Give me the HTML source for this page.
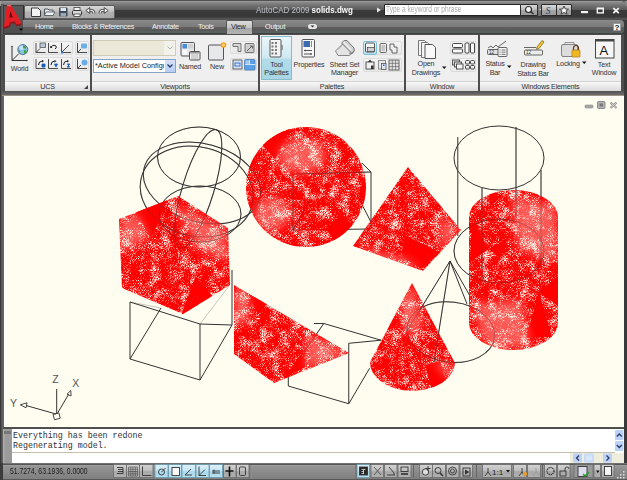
<!DOCTYPE html>
<html><head><meta charset="utf-8">
<style>
*{margin:0;padding:0;box-sizing:border-box}
html,body{width:627px;height:480px;overflow:hidden;background:#3a3a3a;font-family:"Liberation Sans",sans-serif}
.a{position:absolute}
svg{display:block}
#title{left:0;top:0;width:627px;height:20px;background:linear-gradient(#484848 0px,#484848 0.7px,#9c9c9c 1.1px,#949494 1.9px,#8a8a8a 2.2px,#6e6e6e 6px,#5a5a5a 9.8px,#3a3a3a 10.3px,#383838 17.3px,#505050 17.8px,#505050 20px)}
#tabrow{left:23px;top:20px;width:601px;height:14px;background:linear-gradient(#8e8e8e 0px,#868686 1.5px,#7a7a7a 7px,#5c5c5c 7.6px,#585858 11px,#5a6262 11.6px,#586060 13px,#3c3c3c 13.6px);border-radius:0 4px 4px 0}
.tab{top:20px;height:14px;font-size:7.3px;letter-spacing:-0.3px;color:#f2f2f2;line-height:13px;white-space:nowrap}
#ribbon{left:2px;top:34px;width:622px;height:62px;background:linear-gradient(#4e4e4e 0px,#4e4e4e 57px,#5a5a5a 58px,#6c6c6c 61px,#9a9682 61.5px,#9a9682 62px)}
.panel{top:35px;height:56px;background:#efefef}
.ptitle{top:81px;height:10px;background:linear-gradient(#d2d2d2 0px,#d2d2d2 1px,#f6f6f6 1.5px,#ececec 5px,#d9d9d9 10px);font-size:7.2px;letter-spacing:-0.2px;color:#333;text-align:center;line-height:11.5px}
#canvas{left:4px;top:96px;width:620px;height:331px;background:#fffcf0;border:1px solid #fff;border-bottom:none}
.lbl{font-size:7.2px;letter-spacing:-0.2px;color:#333;text-align:center;line-height:8.5px;white-space:nowrap}
.sb{border:1px solid #dcdcdc;border-radius:2px;background:linear-gradient(#f4f4f4,#e8e8e8)}
</style></head><body>

<div class="a" id="title"></div>
<div class="a" style="left:0;top:0;width:4px;height:4px;border-top-left-radius:4px;border-top:1px solid #aaa;border-left:1px solid #aaa"></div>
<div class="a" style="left:0;top:4px;width:4px;height:476px;background:linear-gradient(90deg,#3a3a3a,#3a3a3a 1.3px,#555 1.5px,#606060 2.5px,#6a6a62 4px)"></div>
<!-- app button -->
<div class="a" style="left:3px;top:5px;width:21px;height:29px;background:linear-gradient(#5a5a5a,#4e4e4e);border:1px solid #3a3a3a;border-right-color:#2d2d2d"></div>
<svg class="a" style="left:3px;top:4px" width="21" height="30" viewBox="0 0 21 30">
<path d="M0.75,23 L4,1 L7.8,1 L18.7,19.3 L13.5,20.5 L12,17.5 L7,18 L6,21.5 Z" fill="#e41e24"/>
<path d="M0.75,23 L6,21.5 L7,18 L12,17.5 L13.5,20.5 L18.7,19.3 L18.2,21 L13.2,22.3 L11.8,19.3 L7.8,19.8 L6.8,23.3 L1.2,24.8 Z" fill="#9a1014"/>
<path d="M7.5,7 L9.8,13.5 L6.3,13.5 Z" fill="#6a0c0e"/>
<path d="M4,1 L7.8,1 L8.5,2.2 L4.3,2.2 Z" fill="#ff6a6a"/>
<path d="M16,24.5 h4 l-2,2.2 z" fill="#000"/>
</svg>
<!-- QAT -->
<div class="a" style="left:24px;top:5px;width:91px;height:14px;border:1px solid #5c5c5c;border-radius:2px;background:linear-gradient(#d6d6d6 0px,#c4c4c4 5px,#b2b2b2 6px,#a9a9a9 13px)"></div>
<svg class="a" style="left:24px;top:5px" width="91" height="14" viewBox="24 5 91 14">
<!-- new -->
<path d="M31.5,8 h6.5 l2.5,2.5 v6 h-9 z" fill="#f4f4f4" stroke="#3c3c3c" stroke-width="1"/>
<!-- open -->
<path d="M44.5,9 h3.5 l1,1 h4 v5.5 h-8.5 z" fill="#dfe4ea" stroke="#505860" stroke-width="1"/>
<path d="M46,12 h9 l-2,3.5 h-8.5 z" fill="#f0f2f4" stroke="#505860" stroke-width="0.8"/>
<!-- save -->
<rect x="59" y="7.5" width="8.5" height="9" rx="1" fill="#3d4a5c"/>
<rect x="60.5" y="8" width="5.5" height="3" fill="#dfe6ee"/>
<rect x="60.5" y="13" width="5.5" height="3.5" fill="#9aa6b4"/>
<!-- print -->
<rect x="74" y="7.5" width="6" height="3" fill="#f4f4f4" stroke="#444" stroke-width="0.8"/>
<rect x="72.5" y="10.5" width="9" height="4.5" rx="1" fill="#d8d8d8" stroke="#3a3a3a" stroke-width="1"/>
<rect x="74" y="14" width="6" height="2.5" fill="#fff" stroke="#444" stroke-width="0.8"/>
<!-- undo -->
<path d="M89,10.5 Q94,9.5 94,13.5" fill="none" stroke="#3a3a3a" stroke-width="2.8"/>
<path d="M89,10.5 Q94,9.5 94,13.5" fill="none" stroke="#f4f4f4" stroke-width="1.2"/>
<path d="M85.8,10.5 L89.8,7.6 L89.8,13.4 Z" fill="#f4f4f4" stroke="#3a3a3a" stroke-width="0.9" stroke-linejoin="round"/>
<!-- redo -->
<path d="M105,10.5 Q100,9.5 100,13.5" fill="none" stroke="#3a3a3a" stroke-width="2.8"/>
<path d="M105,10.5 Q100,9.5 100,13.5" fill="none" stroke="#f4f4f4" stroke-width="1.2"/>
<path d="M108.2,10.5 L104.2,7.6 L104.2,13.4 Z" fill="#f4f4f4" stroke="#3a3a3a" stroke-width="0.9" stroke-linejoin="round"/>
</svg>
<!-- title text -->
<div class="a" style="left:256px;top:4px;height:12px;font-size:9.3px;line-height:12px;white-space:nowrap;color:#bcc2c8;transform-origin:0 0;transform:scaleX(0.86)">AutoCAD 2009 <b style="color:#fafafa">solids.dwg</b></div>
<!-- search -->
<svg class="a" style="left:376px;top:7px" width="6" height="6" viewBox="0 0 6 6"><path d="M1,0.5 L5,3 L1,5.5 Z" fill="#e8e8e8"/></svg>
<div class="a" style="left:384px;top:4px;width:137px;height:12px;background:#fff;border:1px solid #222;border-radius:1px"></div>
<div class="a" style="left:386px;top:4px;height:12px;font-size:8.2px;line-height:12px;white-space:nowrap;color:#a8a8a8;transform-origin:0 0;transform:scaleX(0.8)">Type a keyword or phrase</div>
<div class="a" style="left:520px;top:4px;width:18px;height:12px;border:1px solid #2a2a2a;border-radius:1px;background:linear-gradient(#dadada,#b8b8b8 50%,#a4a4a4 51%,#9c9c9c)"></div>
<div class="a" style="left:538px;top:4px;width:4px;height:12px;background:linear-gradient(#8a8a8a,#6a6a6a)"></div>
<div class="a" style="left:541px;top:4px;width:16px;height:12px;border:1px solid #2a2a2a;border-radius:1px;background:linear-gradient(#dadada,#b8b8b8 50%,#a4a4a4 51%,#9c9c9c)"></div>
<div class="a" style="left:556px;top:4px;width:16px;height:12px;border:1px solid #2a2a2a;border-radius:1px;background:linear-gradient(#dadada,#b8b8b8 50%,#a4a4a4 51%,#9c9c9c)"></div>
<svg class="a" style="left:520px;top:4px" width="52" height="12" viewBox="520 4 52 12">
<circle cx="528.5" cy="9.5" r="3" fill="#f4f4f4" stroke="#2c2c2c" stroke-width="1.2"/>
<path d="M530.5,11.5 L533.5,14" stroke="#2c2c2c" stroke-width="1.6"/>
<path d="M539.5,9.5 h1.5" stroke="#ddd" stroke-width="1"/>
<text x="545.5" y="13.5" font-size="10" font-style="italic" fill="#3a4a6a" font-family="Liberation Serif">S</text>
<path d="M564,6 L565.3,9 L568.5,9.2 L566,11.2 L567,14.2 L564,12.5 L561,14.2 L562,11.2 L559.5,9.2 L562.7,9 Z" fill="#f8f8f8" stroke="#333" stroke-width="0.9"/>
</svg>
<!-- window controls -->
<svg class="a" style="left:578px;top:4px" width="46" height="14" viewBox="578 4 46 14">
<rect x="581" y="11" width="7" height="2.2" fill="#f4f4f4"/>
<rect x="597.3" y="8.3" width="6" height="4.6" fill="none" stroke="#f4f4f4" stroke-width="1.4"/>
<rect x="597" y="7.8" width="6.8" height="1.6" fill="#f4f4f4"/>
<path d="M613.3,8.2 L618.8,13.2 M618.8,8.2 L613.3,13.2" stroke="#f4f4f4" stroke-width="1.8"/>
</svg>
<div class="a" style="left:0;top:0;width:627px;height:6px;border-top-right-radius:6px;border-top:1px solid #505050;border-right:1px solid #8a8a8a;border-left:1px solid #9a9a9a;border-top-left-radius:4px"></div>
<!-- tabs -->
<div class="a" id="tabrow"></div>
<div class="a tab" style="left:35px">Home</div>
<div class="a tab" style="left:72px">Blocks &amp; References</div>
<div class="a tab" style="left:152px">Annotate</div>
<div class="a tab" style="left:198px">Tools</div>
<div class="a" style="left:226px;top:20px;width:27px;height:14px;border:1px solid #555;border-bottom:none;border-radius:2px 2px 0 0;background:linear-gradient(#dcdcdc,#c4c4c4 50%,#a8a8a8 55%,#b4b4b4)"></div>
<div class="a tab" style="left:231px;color:#2a2a2a">View</div>
<div class="a tab" style="left:265px">Output</div>
<div class="a" style="left:308px;top:24px;width:9px;height:5px;border-radius:2.5px;background:#e8e8e8"></div>
<svg class="a" style="left:310px;top:25px" width="5" height="3" viewBox="0 0 5 3"><path d="M0.5,0.5 h4 l-2,2 z" fill="#333"/></svg>
<div class="a" style="left:613px;top:23px;width:8px;height:8px;background:#fafafa;border:1px solid #999;font-size:8px;line-height:7px;font-weight:bold;text-align:center;color:#111">?</div>

<div class="a" id="ribbon"></div>
<div class="a panel" style="left:5px;width:85px"></div>
<div class="a panel" style="left:92px;width:166px"></div>
<div class="a panel" style="left:260px;width:144px"></div>
<div class="a panel" style="left:406px;width:72px"></div>
<div class="a panel" style="left:480px;width:141px"></div>
<div class="a ptitle" style="left:5px;width:85px">UCS</div>
<div class="a ptitle" style="left:92px;width:166px">Viewports</div>
<div class="a ptitle" style="left:260px;width:144px">Palettes</div>
<div class="a ptitle" style="left:406px;width:72px">Window</div>
<div class="a ptitle" style="left:480px;width:141px">Windows Elements</div>
<!-- small button groups -->
<div class="a sb" style="left:33px;top:41px;width:40px;height:14px"></div>
<div class="a sb" style="left:33px;top:57px;width:40px;height:14px"></div>
<div class="a sb" style="left:75px;top:41px;width:14px;height:14px"></div>
<div class="a sb" style="left:75px;top:57px;width:14px;height:14px"></div>
<div class="a sb" style="left:230px;top:41px;width:27px;height:13px"></div>
<div class="a sb" style="left:230px;top:58px;width:27px;height:13px"></div>
<div class="a sb" style="left:363px;top:41px;width:39px;height:14px"></div>
<div class="a sb" style="left:363px;top:58px;width:39px;height:14px"></div>
<div class="a sb" style="left:450px;top:41px;width:26px;height:14px"></div>
<div class="a sb" style="left:450px;top:58px;width:26px;height:14px"></div>
<div class="a" style="left:363px;top:41px;width:14px;height:14px;border:1px solid #7cc0d8;border-radius:2px;background:linear-gradient(#e4f4fa,#b8e0ee)"></div>
<!-- combos -->
<div class="a" style="left:93px;top:40px;width:83px;height:16px;background:#ebe8d8;border:1px solid #cfcbb6"></div>
<div class="a" style="left:164px;top:41px;width:11px;height:14px;background:#f2f1ea"></div>
<div class="a" style="left:93px;top:59px;width:83px;height:14px;background:#fff;border:1px solid #87a4c4"></div>
<div class="a" style="left:165px;top:60px;width:10px;height:12px;background:linear-gradient(#d6e2fa,#b8cdf4)"></div>
<div class="a" style="left:95px;top:60px;width:69px;overflow:hidden;height:12px;font-size:7.3px;line-height:12px;white-space:nowrap;color:#222">*Active Model Configu</div>
<!-- tool palettes highlight -->
<div class="a" style="left:261px;top:36px;width:31px;height:44px;border:1px solid #86bccc;background:linear-gradient(#eaf6fa 0px,#cfe9f1 21px,#b2dce8 22px,#a8d6e4 43px)"></div>
<!-- labels -->
<div class="a lbl" style="left:5px;top:64.6px;width:29px">World</div>
<div class="a lbl" style="left:176px;top:62.6px;width:28px">Named</div>
<div class="a lbl" style="left:203px;top:62.6px;width:28px">New</div>
<div class="a lbl" style="left:261px;top:60.6px;width:31px">Tool<br>Palettes</div>
<div class="a lbl" style="left:292px;top:60.6px;width:34px">Properties</div>
<div class="a lbl" style="left:326px;top:60.6px;width:37px">Sheet Set<br>Manager</div>
<div class="a lbl" style="left:406px;top:60px;width:40px">Open<br>Drawings</div>
<div class="a lbl" style="left:480px;top:60px;width:30px">Status<br>Bar</div>
<div class="a lbl" style="left:512px;top:61.2px;width:42px">Drawing<br>Status Bar</div>
<div class="a lbl" style="left:554px;top:60px;width:28px">Locking</div>
<div class="a lbl" style="left:586px;top:60.6px;width:36px">Text<br>Window</div>
<svg class="a" style="left:0;top:34px" width="627" height="61" viewBox="0 34 627 61">
<g fill="#111">
<path d="M442,66.5 h4.5 l-2.25,2.5 z"/>
<path d="M507,65.5 h4.5 l-2.25,2.5 z"/>
<path d="M582,61.5 h4.5 l-2.25,2.5 z"/>
<path d="M88,85 v4 h-4 z" fill="#444"/>
</g>
<!-- World icon -->
<g stroke="#333" stroke-width="1" fill="none">
<path d="M12,46.5 V60.5 H27 M12,60.5 L19,53.5"/>
</g>
<path d="M11,47 l1,-1.5 l1,1.5 z M26.5,59.5 l1.5,1 l-1.5,1 z" fill="#333"/>
<circle cx="22.8" cy="49.6" r="5" fill="#86c4e6" stroke="#4a6a88" stroke-width="0.9"/><circle cx="21.5" cy="47.8" r="2.2" fill="#c4e6f6"/>
<path d="M23,45.5 q3,0 3.5,2.5 q-1.5,1 -2.5,0 q-1,1.5 -1,-2.5 z M24,50 q2.5,0 3,2 q-1,2.5 -3,1.5 z M18.5,50 q1.5,0 2,1.5 q-1,1 -2,-0.5 z" fill="#4a9a4a"/>
<!-- UCS small icons -->
<g stroke="#4a4a4a" stroke-width="1" fill="none">
<path d="M36,43 V52.5 H45.5 M48.5,43 V52.5 H58 M61.5,43 V52.5 H71 M36,59 V68.5 H45.5 M48.5,59 V68.5 H58 M61.5,59 V68.5 H71 M77.5,43 V52.5 H87 M77.5,59 V68.5 H87"/>
<path d="M36,52.5 L40,48.5 M61.5,52.5 L69,45 M77.5,52.5 L81,49 M77.5,68.5 L81,65"/>
</g>
<rect x="40" y="43" width="5.5" height="4.5" fill="#b8c8d8" stroke="#555" stroke-width="0.8"/>
<path d="M51,48 q1,-4 5,-2 q1,2 -1,3" fill="none" stroke="#222" stroke-width="1"/>
<circle cx="51" cy="47" r="1" fill="#222"/>
<rect x="61" y="51.5" width="2" height="2" fill="#2a7ad0"/>
<rect x="81" y="43.5" width="6" height="5" rx="1" fill="#6aaee8"/>
<circle cx="84.5" cy="62.5" r="3" fill="#6aaee8"/>
<g fill="none" stroke="#222" stroke-width="1"><path d="M38.5,65 q0,-4 4,-4 M51,65 q0,-4 4,-4 M63.5,65 q0,-4 4,-4"/></g>
<path d="M42,60 l2,1 l-2,1.5 z M54.5,60 l2,1 l-2,1.5 z M67,60 l2,1 l-2,1.5 z" fill="#222"/>
<path d="M42,64 h3 v3 h-3 z M54.5,64 h3 l-1.5,3 z M67,64 h3 l-3,3 h3" fill="#1a5ab8" stroke="#1a5ab8" stroke-width="0.8"/>
<!-- combo chevrons -->
<path d="M167.5,46.5 l2.5,2.5 l2.5,-2.5" fill="none" stroke="#b0b0b0" stroke-width="1"/>
<path d="M167.5,64.5 l2.5,2.5 l2.5,-2.5" fill="none" stroke="#2a3a6a" stroke-width="1.3"/>
<!-- Named icon -->
<rect x="181" y="42.5" width="13.5" height="13.5" rx="1" fill="#e8e8e8" stroke="#555" stroke-width="1"/>
<rect x="182.5" y="44" width="4.5" height="4.5" fill="#4a8ad8"/>
<rect x="188" y="44" width="5" height="4.5" fill="#d0d0d0"/>
<rect x="182.5" y="49.5" width="4.5" height="5" fill="#fafafa"/>
<rect x="189.5" y="51.5" width="10.5" height="8.5" rx="1" fill="#fafafa" stroke="#505050" stroke-width="1"/>
<rect x="190" y="52" width="9.5" height="1.6" fill="#9a9a9a"/>
<path d="M191,55 h7.5 M191,57 h7.5 M191,59 h7.5" stroke="#888" stroke-width="0.7"/>
<!-- New icon -->
<rect x="208.5" y="45" width="15" height="15" rx="1" fill="#e6e8ea" stroke="#555" stroke-width="1"/>
<circle cx="223.5" cy="45" r="2.8" fill="#ff9a10"/>
<circle cx="223.5" cy="45" r="1.4" fill="#ffe080"/>
<!-- viewport small -->
<path d="M233,43.5 h8 v8 h-3 v-5 h-5 z" fill="#d8d8d8" stroke="#666" stroke-width="0.9"/>
<rect x="245" y="43.5" width="9" height="9" rx="1" fill="#cfcfcf" stroke="#666" stroke-width="0.9"/>
<path d="M247,51 l5,-5 M250,46 h2.5 v2.5" stroke="#555" fill="none" stroke-width="0.9"/>
<rect x="233" y="60" width="9" height="9" fill="#d8e4f0" stroke="#555" stroke-width="0.9"/>
<rect x="235" y="63" width="5" height="3" fill="none" stroke="#2a6ad0" stroke-width="0.9"/>
<rect x="244.5" y="59.5" width="10.5" height="10.5" rx="1" fill="#5aa0e8" stroke="#4a7ab8" stroke-width="0.8"/>
<path d="M245,64.5 h10 M249.5,60 v4.5" stroke="#cfe2f8" stroke-width="1"/>
<rect x="245.5" y="60.5" width="3.5" height="3.5" fill="#a8c8e8"/>
<!-- tool palettes icon -->
<rect x="270" y="39.5" width="11" height="17.5" rx="1" fill="#f4f4f4" stroke="#555" stroke-width="1"/>
<rect x="281" y="45" width="1.8" height="5" fill="#888"/>
<g fill="#777"><rect x="271.5" y="42" width="2" height="2"/><rect x="275" y="42" width="2" height="2"/><rect x="271.5" y="45.5" width="2" height="2"/><rect x="275" y="45.5" width="2" height="2"/><rect x="271.5" y="49" width="2" height="2"/><rect x="275" y="49" width="2" height="2"/><rect x="271.5" y="52.5" width="2" height="2"/><rect x="275" y="52.5" width="2" height="2"/></g>
<!-- properties icon -->
<rect x="302" y="39.5" width="12.5" height="17.5" rx="1" fill="#f8f8f8" stroke="#555" stroke-width="1"/>
<rect x="303.5" y="41" width="6.5" height="6" fill="#3a6ab0"/>
<path d="M311.5,41 v6" stroke="#888"/>
<path d="M304,50.5 h8 M304,54 h8" stroke="#444" stroke-width="0.9"/>
<path d="M304,50.5 l1.5,-1.2 v2.4 z M312,54 l-1.5,-1.2 v2.4 z" fill="#444"/>
<!-- sheet set -->
<path d="M335.5,51 L343,43.5 L352.5,53 L349,55.5 L338,55.5 Z" fill="#e4e4e4" stroke="#7a7a7a" stroke-width="0.9"/>
<path d="M338,49.5 L345,42.5" stroke="#9a9a9a" stroke-width="0.7"/>
<path d="M341.5,43 Q344,39.5 347,40.5 L354,48 Q355.5,51.5 352,53.5 Z" fill="#d0d0d0" stroke="#6a6a6a" stroke-width="0.9"/>
<path d="M343.5,42 L351,50" stroke="#f4f4f4" stroke-width="1.3"/>
<path d="M349,53 Q352,55 354,51" fill="none" stroke="#6a6a6a" stroke-width="0.8"/>
<!-- palettes small -->
<rect x="365.5" y="43" width="9" height="9" rx="1" fill="#f4f4f4" stroke="#444" stroke-width="0.9"/>
<rect x="367.5" y="47.5" width="7" height="4" fill="#d0d0d0" stroke="#444" stroke-width="0.7"/>
<rect x="380" y="43.5" width="6.5" height="9" rx="1" fill="#eee" stroke="#555" stroke-width="0.9"/>
<path d="M381.5,46 h3.5 M381.5,48 h3.5 M381.5,50 h3.5" stroke="#777" stroke-width="0.7"/>
<path d="M390,44 h4 v3 h3 v6 h-5 v-3 h-2 z" fill="#f0f0f0" stroke="#555" stroke-width="0.9"/>
<rect x="366" y="62" width="8" height="7" fill="#f0f0f0" stroke="#444" stroke-width="0.9"/>
<path d="M368,62 l2,-2.5 l2,2.5 z" fill="#333"/>
<rect x="371" y="65.5" width="2.5" height="3.5" fill="#333"/>
<rect x="378.5" y="60.5" width="7" height="8.5" fill="#e8e8e8" stroke="#777" stroke-width="0.8"/>
<rect x="381.5" y="63.5" width="4.5" height="6" fill="#dde8f4" stroke="#555" stroke-width="0.8"/>
<rect x="383" y="64.5" width="1.5" height="1.5" fill="#2a6ad0"/>
<rect x="389" y="60" width="10" height="10" fill="#e4e4e4" stroke="#555" stroke-width="0.9"/>
<path d="M392.3,60 v10 M395.6,60 v10 M389,63.3 h10 M389,66.6 h10" stroke="#666" stroke-width="0.7"/>
<!-- open drawings -->
<path d="M418.5,40.5 h6 l2,2 v13 h-8 z" fill="#f4f4f4" stroke="#666" stroke-width="0.9"/>
<path d="M421.5,42.5 h6 l2,2 v13 h-8 z" fill="#f4f4f4" stroke="#666" stroke-width="0.9"/>
<path d="M425,44.5 h7.5 l3,3 v11 h-10.5 z" fill="#f8f8f8" stroke="#555" stroke-width="1"/>
<!-- window small -->
<rect x="452.5" y="43.5" width="10" height="4" rx="1" fill="#fafafa" stroke="#444" stroke-width="1"/>
<rect x="452.5" y="49" width="10" height="4" rx="1" fill="#fafafa" stroke="#444" stroke-width="1"/>
<rect x="465" y="43" width="4" height="10" rx="1" fill="#fafafa" stroke="#444" stroke-width="1"/>
<rect x="470.5" y="43" width="4" height="10" rx="1" fill="#fafafa" stroke="#444" stroke-width="1"/>
<rect x="452.5" y="60" width="7" height="5" fill="#ddd" stroke="#444" stroke-width="0.9"/>
<rect x="454.5" y="62" width="7" height="5" fill="#e8e8e8" stroke="#444" stroke-width="0.9"/>
<rect x="456.5" y="64" width="6.5" height="5" fill="#f4f4f4" stroke="#444" stroke-width="0.9"/>
<g fill="none" stroke="#444" stroke-width="1"><rect x="465.5" y="60.5" width="4" height="3.5" rx="1"/><rect x="470.5" y="60.5" width="4" height="3.5" rx="1"/><rect x="465.5" y="65.5" width="4" height="3.5" rx="1"/><rect x="470.5" y="65.5" width="4" height="3.5" rx="1"/></g>
<!-- status bar icon -->
<path d="M488,48 l3,-2 l2,2 l3,-3 l2,2 l8,-6" fill="none" stroke="#555" stroke-width="0.9"/>
<rect x="487.5" y="49.5" width="12" height="5" rx="1" fill="#e0e0e0" stroke="#555" stroke-width="0.9"/>
<text x="489" y="54" font-size="4.5" fill="#333">12</text>
<rect x="498" y="47.5" width="9" height="9" rx="1" fill="#f4f4f4" stroke="#555" stroke-width="0.9"/>
<path d="M501.5,50 h4 M501.5,52.2 h4 M501.5,54.4 h4" stroke="#555" stroke-width="0.8"/><path d="M499.5,50 h1 M499.5,52.2 h1 M499.5,54.4 h1" stroke="#555" stroke-width="0.8"/>
<!-- drawing status bar -->
<path d="M524,47.5 h12" stroke="#555" stroke-width="0.9"/>
<path d="M537,47 l5,-6.5 l2,1.5 l-5,6.5 l-2.5,0.8 z" fill="#f8c830" stroke="#6a5a20" stroke-width="0.7"/>
<rect x="524.5" y="50" width="18" height="5" rx="1" fill="#ececec" stroke="#555" stroke-width="0.9"/>
<text x="526" y="54.3" font-size="4.5" fill="#333">12</text>
<!-- locking -->
<rect x="561.5" y="44.5" width="16" height="12" rx="1.5" fill="#dcdcdc" stroke="#777" stroke-width="0.9"/>
<path d="M565,44.5 v-2 h9 v2" fill="none" stroke="#888" stroke-width="0.9"/>
<path d="M573.5,50 v-2 a2.5,2.5 0 0 1 5,0 v2" fill="none" stroke="#6a3a1a" stroke-width="1.2"/>
<rect x="572" y="50" width="8" height="7" rx="0.5" fill="#f0b820" stroke="#9a7010" stroke-width="0.6"/>
<!-- text window -->
<rect x="595.5" y="39.5" width="18.5" height="18.5" fill="#f6f6f6" stroke="#444" stroke-width="1"/>
<rect x="595.5" y="39.5" width="18.5" height="2" fill="#444"/>
<text x="599.5" y="55" font-size="13" fill="#111" font-family="Liberation Sans">A</text>
</svg>

<div class="a" id="canvas"></div>
<svg class="a" style="left:4px;top:96px" width="620" height="331" viewBox="4 96 620 331">
<defs>
<filter id="st" x="0" y="0" width="100%" height="100%" color-interpolation-filters="sRGB">
<feTurbulence type="fractalNoise" baseFrequency="1.4" numOctaves="1" seed="7" result="n"/>
<feColorMatrix in="n" type="matrix" values="1 0 0 0 0  1 0 0 0 0  1 0 0 0 0  0 0 0 0 1" result="n1"/>
<feTurbulence type="fractalNoise" baseFrequency="0.1" numOctaves="2" seed="3" result="nb"/>
<feColorMatrix in="nb" type="matrix" values="1 0 0 0 0  1 0 0 0 0  1 0 0 0 0  0 0 0 0 1" result="n2"/>
<feGaussianBlur in="SourceAlpha" stdDeviation="1.5" result="b"/>
<feColorMatrix in="b" type="matrix" values="0 0 0 1 0  0 0 0 1 0  0 0 0 1 0  0 0 0 0 1" result="b1"/>
<feComposite in="n1" in2="n2" operator="arithmetic" k1="0" k2="0.6" k3="0.4" k4="0" result="c0"/>
<feComposite in="c0" in2="b1" operator="arithmetic" k1="0" k2="1" k3="0" k4="0" result="c"/>
<feColorMatrix in="c" type="matrix" values="0 0 0 0 1  0 0 0 0 0  0 0 0 0 0  5 0 0 0 -1.58" result="m"/>
<feComposite in="m" in2="SourceGraphic" operator="in"/>
</filter>
<filter id="bl" x="-20%" y="-20%" width="140%" height="140%"><feGaussianBlur stdDeviation="4"/></filter>
<clipPath id="cl">
<polygon points="178,196 228,228 230,285 183,314 122,288 119,219"/>
<circle cx="306" cy="187" r="60"/>
<polygon points="408,167 461,230 423,271 353,246"/>
<rect x="469" y="190" width="89" height="160" rx="44.5" ry="27"/>
<polygon points="234,285 349,353 274,383 234,354"/>
<path d="M412,283 L370,362 A42,28 0 0 0 455,363 Z"/>
</clipPath>
</defs>
<g fill="none" stroke="#333" stroke-width="1">
<!-- sphere wireframe -->
<ellipse cx="199" cy="157" rx="41.5" ry="30"/>
<ellipse cx="200" cy="214" rx="41" ry="28"/>
<ellipse cx="202" cy="183" rx="59.8" ry="39.1" transform="rotate(15 202 183)"/>
<ellipse cx="196.7" cy="191.6" rx="57.1" ry="44.7" transform="rotate(13.8 196.7 191.6)"/>
<ellipse cx="198.2" cy="188.9" rx="15.8" ry="61.9" transform="rotate(17 198.2 188.9)"/>
<!-- box behind circle -->
<path d="M293,174 L371,172 L371,229 L293,230 Z M362,163 L371,172 M357,195 L371,222 M293,230 L310,200"/>
<!-- cylinder wireframe -->
<ellipse cx="499" cy="158" rx="45" ry="32"/>
<path d="M457.8,137 V236 M516,127 V218 M541,170 V266 M482,188 V281"/>

<!-- left lower box -->
<path d="M130,302 V359 L200,380 V324 L130,302 M200,324 L232,325 V270 M200,380 L232,325 M130,359 L161,308"/>
<!-- middle lower box -->
<path d="M314,323.5 L323.75,323.5 L381,340.2 L348.75,343.3 V403.75 L288.3,386 V372 M348.75,403.75 L369.6,368.3 M323.75,323.5 L304,352"/>
<!-- box left of red cone -->

<!-- wireframe cone -->
<path d="M450,261 L407,331 M450,261 L434,362 M450,261 L467,304 M450,261 L470,296"/>
<ellipse cx="450.8" cy="332.1" rx="44.1" ry="30.1" transform="rotate(7.1 450.8 332.1)"/>
<ellipse cx="499" cy="251" rx="45" ry="32"/>

<!-- UCS -->
<path d="M56.7,389 V414 M57,414 L68.5,394.5 M56,414 L26,405.5"/><path d="M70.8,390.5 L71,396 L67,394.2 Z M20.3,404.8 L27,402.8 L26,407.8 Z" stroke-width="0.9"/>
</g>
<g fill="#ff0000" filter="url(#st)">
<polygon points="178,196 228,228 230,285 183,314 122,288 119,219"/>
<circle cx="306" cy="187" r="60"/>
<polygon points="408,167 461,230 423,271 353,246"/>
<rect x="469" y="190" width="89" height="160" rx="44.5" ry="27"/>
<polygon points="234,285 349,353 274,383 234,354"/>
<path d="M412,283 L370,362 A42,28 0 0 0 455,363 Z"/>
</g>
<g fill="#ff0000" clip-path="url(#cl)">
<polygon points="134,210 168,198 151.5,238.6"/>
<polygon points="180,318 216,300 195.7,276.3"/>
<polygon points="256,137 275.2,159.3 292,126"/>
<polygon points="326,229 342,214 358,232 342,252"/>
<polygon points="405,235 440,252.5 422.5,268 402,258"/>
<polygon points="472,221 489,249 470,262"/>
<polygon points="489,249 508,238 500,258"/>
<polygon points="539,292 559,276 559,306"/>
<polygon points="539,292 526,337 552,337"/>
<polygon points="248.6,293.8 267,303 257.8,314.4"/>
<polygon points="285.3,376.3 306,367 301.4,353.4"/>
<polygon points="425,365 440,361 447,383 432,390"/>
</g>
<g clip-path="url(#cl)"><g fill="#fffcf0" opacity="0.35" filter="url(#bl)">
<polygon points="120,222 137,213 150,238 121,252"/>
<polygon points="172,204 226,228 228,262 200,250"/>
<ellipse cx="302" cy="156" rx="24" ry="17"/>
<ellipse cx="272" cy="214" rx="18" ry="16"/>
<polygon points="511,197 556,205 558,262 518,250"/>
<polygon points="472,304 522,300 530,348 485,346"/>
<polygon points="356,246 405,258 422,270 380,262"/>
<polygon points="440,215 459,230 440,252"/>
<polygon points="234,287 249,294 249,322 234,325"/>
<polygon points="306,333 348,353 306,370"/>
<polygon points="433,361 454,365 449,380"/>
<polygon points="400,300 413,283 423,330 405,335"/>
</g></g>
<g fill="none" stroke="#333" stroke-width="0.9" opacity="0.3">
<ellipse cx="499" cy="251" rx="45" ry="32"/>
<path d="M482,188 V281 M516,127 V218 M541,170 V266"/>
<path d="M293,174 L371,172 M293,174 V230 M293,230 L310,200"/>
<ellipse cx="199" cy="157" rx="41.5" ry="30"/>
<ellipse cx="200" cy="214" rx="41" ry="28"/>
<ellipse cx="202" cy="183" rx="59.8" ry="39.1" transform="rotate(15 202 183)"/>
<ellipse cx="196.7" cy="191.6" rx="57.1" ry="44.7" transform="rotate(13.8 196.7 191.6)"/>
<ellipse cx="198.2" cy="188.9" rx="15.8" ry="61.9" transform="rotate(17 198.2 188.9)"/>
<path d="M200,324 L229,286 M130,302 L161,308"/>
<path d="M450,261 L407,331 M450,261 L434,362"/>
<ellipse cx="450.8" cy="332.1" rx="44.1" ry="30.1" transform="rotate(7.1 450.8 332.1)"/>
<path d="M323.75,323.5 L304,352"/>
</g>
<g fill="#555" font-family="Liberation Sans" font-size="10.5">
<text x="52.3" y="383.4">Z</text><text x="72.3" y="386.8">X</text><text x="10" y="407.2">Y</text>
</g>
<rect x="53.7" y="413.6" width="6" height="5.5" fill="none" stroke="#444" stroke-width="0.9" transform="rotate(-15 56.7 416.4)"/>
<g>
<rect x="585" y="105" width="8" height="3" rx="1" fill="#a8a8a8" stroke="#8a8a8a" stroke-width="0.6"/>
<rect x="597.5" y="101.5" width="7.5" height="7" rx="1" fill="#b4b4b4" stroke="#7a7a7a" stroke-width="0.8"/>
<rect x="599.5" y="103.5" width="3.5" height="3" fill="#777"/>
<path d="M610.5,102.5 l6,5.5 M616.5,102.5 l-6,5.5" stroke="#8a8a8a" stroke-width="2.2"/>
<path d="M610.5,102.5 l6,5.5 M616.5,102.5 l-6,5.5" stroke="#e8e8e8" stroke-width="0.8"/>
</g>
</svg>
<!-- command line -->
<div class="a" style="left:3px;top:427px;width:621px;height:2.5px;background:linear-gradient(#5a5a5a,#4a4a4a 1px,#555)"></div>
<div class="a" style="left:3px;top:429px;width:9px;height:34px;background:linear-gradient(90deg,#b4b4b4,#9c9c9c 2px,#9a9a9a)"></div>
<div class="a" style="left:4px;top:431px;width:7px;height:3px;background:#777"></div>
<div class="a" style="left:12px;top:429px;width:612px;height:34px;background:#fff"></div>
<div class="a" style="left:13px;top:430.8px;font-family:'Liberation Mono',monospace;font-size:8.3px;line-height:10px;color:#303030;white-space:pre">Everything has been redone
Regenerating model.</div>
<div class="a" style="left:12px;top:452px;width:603px;height:1px;background:#c6c0b0"></div>
<div class="a" style="left:570px;top:453px;width:54px;height:10px;background:#efeddc"></div>
<div class="a" style="left:615px;top:429px;width:9px;height:23px;background:#fff"></div>
<svg class="a" style="left:570px;top:429px" width="54" height="34" viewBox="570 429 54 34">
<rect x="615" y="430" width="8.5" height="10" rx="1" fill="#bcd2f6"/>
<rect x="615" y="441" width="8.5" height="10" rx="1" fill="#bcd2f6"/>
<path d="M616.8,436.5 l2.5,-2.5 l2.5,2.5 M616.8,445 l2.5,2.5 l2.5,-2.5" fill="none" stroke="#2a3a6a" stroke-width="1.3"/>
<rect x="573" y="453.5" width="9" height="9" rx="1" fill="#bcd2f6"/>
<rect x="584" y="453.5" width="10" height="9" rx="1" fill="#c8daf8"/>
<rect x="586" y="455.5" width="6" height="5" fill="#d8e6fa"/>
<rect x="603" y="453.5" width="9" height="9" rx="1" fill="#bcd2f6"/>
<path d="M579,455.5 l-2.5,2.5 l2.5,2.5 M606.5,455.5 l2.5,2.5 l-2.5,2.5" fill="none" stroke="#2a3a6a" stroke-width="1.3"/>
</svg>
<!-- status bar -->
<div class="a" style="left:0;top:463px;width:627px;height:17px;background:linear-gradient(#9a9a9a 0px,#585858 0.8px,#555 1.6px,#a2a2a2 2.2px,#949494 3.5px,#808080 15.5px,#585858 16.5px,#505050 17px)"></div>
<div class="a" style="left:0;top:463px;width:3px;height:17px;background:#3c3c3c"></div>
<div class="a" style="left:10px;top:465px;height:12px;font-size:8.3px;line-height:12px;white-space:nowrap;color:#1a1a1a;transform-origin:0 0;transform:scaleX(0.82)">51.7274, 63.1936, 0.0000</div>
<svg class="a" style="left:0;top:463px" width="627" height="17" viewBox="0 463 627 17">
<defs>
<linearGradient id="gb" x1="0" y1="0" x2="0" y2="1"><stop offset="0" stop-color="#d4d4d4"/><stop offset="0.5" stop-color="#bcbcbc"/><stop offset="0.55" stop-color="#a8a8a8"/><stop offset="1" stop-color="#b0b0b0"/></linearGradient>
<linearGradient id="bb" x1="0" y1="0" x2="0" y2="1"><stop offset="0" stop-color="#e0f2fa"/><stop offset="0.5" stop-color="#c2e4f2"/><stop offset="0.55" stop-color="#a8d8ec"/><stop offset="1" stop-color="#b8e0f0"/></linearGradient>
</defs>
<g stroke="#6a6a6a" stroke-width="0.8">
<rect x="113.5" y="464.5" width="13" height="13" fill="url(#gb)"/>
<rect x="126.5" y="464.5" width="13" height="13" fill="url(#gb)"/>
<rect x="139.5" y="464.5" width="13.5" height="13" fill="url(#gb)"/>
<rect x="223.5" y="464.5" width="12.5" height="13" fill="url(#gb)"/>
<rect x="236.5" y="464.5" width="12.5" height="13" fill="url(#gb)"/>
<rect x="371" y="464.5" width="12.5" height="13" fill="url(#gb)"/>
<rect x="384.5" y="464.5" width="12.5" height="13" fill="url(#gb)"/>
<rect x="398" y="464.5" width="13" height="13" fill="url(#gb)"/>
<rect x="419.5" y="464.5" width="13" height="13" fill="url(#gb)"/>
<rect x="432.5" y="464.5" width="13" height="13" fill="url(#gb)"/>
<rect x="446.5" y="464.5" width="12.5" height="13" fill="url(#gb)"/>
<rect x="460" y="464.5" width="12.5" height="13" fill="url(#gb)"/>
<rect x="482.5" y="464.5" width="29" height="13" fill="url(#gb)"/>
<rect x="513.5" y="464.5" width="13" height="13" fill="url(#gb)"/>
<rect x="527.5" y="464.5" width="13" height="13" fill="url(#gb)"/>
<rect x="544.5" y="464.5" width="12" height="13" fill="url(#gb)"/>
<rect x="557.5" y="464.5" width="12.5" height="13" fill="url(#gb)"/>
<rect x="574" y="464.5" width="19" height="13" fill="#9a9a9a"/>
<rect x="594" y="464.5" width="6.5" height="13" fill="url(#gb)"/>
<rect x="601.5" y="464.5" width="12.5" height="13" fill="url(#gb)"/>
</g>
<g stroke="#6a9ab0" stroke-width="0.8">
<rect x="155" y="464.5" width="13" height="13" fill="url(#bb)"/>
<rect x="168.5" y="464.5" width="13" height="13" fill="url(#bb)"/>
<rect x="182" y="464.5" width="13.5" height="13" fill="url(#bb)"/>
<rect x="196" y="464.5" width="13" height="13" fill="url(#bb)"/>
<rect x="209.5" y="464.5" width="13" height="13" fill="url(#bb)"/>
<rect x="357" y="464.5" width="12.5" height="13" fill="url(#bb)"/>
</g>
<g stroke="#333" stroke-width="0.9" fill="none">
<path d="M117,467.5 h6 v6 h-6 M118,469.5 h5 M118,471.5 h5"/>
<path d="M128.5,467 h9 v9 h-9 z M130.75,467 v9 M133,467 v9 M135.25,467 v9 M128.5,469.25 h9 M128.5,471.5 h9 M128.5,473.75 h9" stroke-width="0.5"/>
<path d="M142.5,466.5 v9 h9"/>
<circle cx="161.5" cy="472" r="3"/><path d="M161.5,472 l4,-4"/>
<rect x="172" y="467.5" width="7.5" height="8" fill="#f8f8f8"/>
<path d="M185,475 l6,-6 M185,475 h7"/>
<path d="M199,466.5 v9 h7 M199,475.5 l6,-6"/>
<path d="M212,471 h8 M214,469.5 v4 M212,473 h8"/>
<path d="M229.5,466.5 v10 M225.5,471 h8" stroke-width="1.6" stroke="#111"/>
<rect x="239.5" y="467" width="6" height="8.5" rx="1"/>
<rect x="359.5" y="467" width="8" height="8" fill="#2a2a2a"/><path d="M361.5,469.5 h4 M361.5,471.5 h2.5 M361.5,473.5 h2.5 M363.5,469.5 v4.5" stroke="#ddd" stroke-width="0.8"/>
<path d="M374,467 l7,8 M374,475 l7,-8" stroke="#555"/>
<path d="M387,475 h8 M389,467 l5,6 v2" />
<rect x="401" y="467" width="7" height="4.5"/><path d="M401,474 h7" stroke-width="1.6"/>
<circle cx="425.5" cy="472" r="3.2" fill="#ddd"/><path d="M428,466 v5 M425.5,468.5 h5"/>
<circle cx="438" cy="470.5" r="3"/><path d="M440,473 l3,3" stroke-width="1.6"/>
<circle cx="452.5" cy="471" r="4"/><circle cx="452.5" cy="471" r="2"/>
<rect x="463" y="468" width="7" height="8"/><path d="M465.5,470 l3,2 l-3,2 z" fill="#333"/>
<path d="M485,476 l3,-4 l3,4 M488,472 v-4" />
<path d="M519,476 l3,-4 l3,4 M522,472 v-4" />
<path d="M533,476 l3,-4 l3,4 M536,472 v-4" stroke="#999"/>
<circle cx="550.5" cy="471" r="3.5" stroke-dasharray="1.2 0.8" stroke-width="1.4"/>
<rect x="560" y="471" width="6" height="5"/><path d="M565,471 v-2 a2,2 0 0 1 4,0"/>
<rect x="578" y="466.5" width="9" height="10" fill="#dde"/>
<rect x="604.5" y="466.5" width="7" height="9" fill="#f4f4f4"/>
</g>
<text x="492" y="474.5" font-size="8" fill="#222">1:1</text>
<path d="M506,470 h4 l-2,2.5 z M596,470.5 h3.5 l-1.75,2.5 z" fill="#111"/>
<circle cx="525" cy="474" r="2" fill="#f0a020"/>
<path d="M583,474 l2,2 l4,-4" stroke="#2a9a2a" stroke-width="1.6" fill="none"/>
<g fill="#ddd"><rect x="623" y="471" width="1.5" height="1.5"/><rect x="620" y="474" width="1.5" height="1.5"/><rect x="623" y="474" width="1.5" height="1.5"/><rect x="617" y="477" width="1.5" height="1.5"/><rect x="620" y="477" width="1.5" height="1.5"/><rect x="623" y="477" width="1.5" height="1.5"/></g>
<path d="M250,465 v14 M356,465 v14 M413.5,465 v13 M476.5,465 v13 M542.5,465 v13" stroke="#666" stroke-width="1"/><path d="M251,465 v14" stroke="#9a9a9a" stroke-width="0.8"/>
</svg>

</body></html>
